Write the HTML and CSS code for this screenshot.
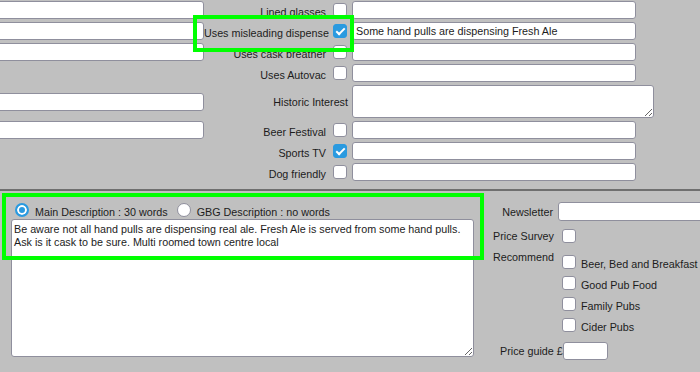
FILE: index.html
```html
<!DOCTYPE html>
<html lang="en">
<head>
    <meta charset="UTF-8">
    <title>Pub details</title>
    <link rel="stylesheet" href="styles.css">
</head>
<body>

    <!-- upper part of the form -->
    <div class="facilities">
        <input type="text" class="left-input" style="grid-row: 1">
        <label class="fac-label" style="grid-row: 1">Lined glasses</label>
        <input type="checkbox" class="check" style="grid-row: 1">
        <input type="text" class="fac-input" style="grid-row: 1">

        <input type="text" class="left-input" style="grid-row: 2">
        <label class="fac-label" style="grid-row: 2">Uses misleading dispense</label>
        <input type="checkbox" class="check" style="grid-row: 2" checked>
        <input type="text" class="fac-input" style="grid-row: 2" value="Some hand pulls are dispensing Fresh Ale">

        <input type="text" class="left-input" style="grid-row: 3">
        <label class="fac-label" style="grid-row: 3">Uses cask breather</label>
        <input type="checkbox" class="check" style="grid-row: 3">
        <input type="text" class="fac-input" style="grid-row: 3">

        <label class="fac-label" style="grid-row: 4">Uses Autovac</label>
        <input type="checkbox" class="check" style="grid-row: 4">
        <input type="text" class="fac-input" style="grid-row: 4">

        <input type="text" class="left-input" style="grid-row: 5">
        <label class="fac-label wide" style="grid-row: 5">Historic Interest</label>
        <textarea class="fac-area" style="grid-row: 5"></textarea>

        <input type="text" class="left-input" style="grid-row: 6">
        <label class="fac-label" style="grid-row: 6">Beer Festival</label>
        <input type="checkbox" class="check" style="grid-row: 6">
        <input type="text" class="fac-input" style="grid-row: 6">

        <label class="fac-label" style="grid-row: 7">Sports TV</label>
        <input type="checkbox" class="check" style="grid-row: 7" checked>
        <input type="text" class="fac-input" style="grid-row: 7">

        <label class="fac-label" style="grid-row: 8">Dog friendly</label>
        <input type="checkbox" class="check" style="grid-row: 8">
        <input type="text" class="fac-input" style="grid-row: 8">
    </div>

    <!-- lower part: description + extras -->
    <div class="lower">
        <div class="desc">
            <div class="desc-tabs">
                <input type="radio" name="desc" class="radio" checked>
                <span class="tab-text">Main Description : 30 words</span>
                <input type="radio" name="desc" class="radio">
                <span class="tab-text">GBG Description : no words</span>
            </div>
            <textarea class="desc-area">Be aware not all hand pulls are dispensing real ale. Fresh Ale is served from some hand pulls. Ask is it cask to be sure. Multi roomed town centre local</textarea>
        </div>

        <div class="extras">
            <label class="ex-label">Newsletter</label>
            <input type="text" class="news-input">

            <label class="ex-label">Price Survey</label>
            <div><input type="checkbox" class="check"></div>

            <label class="ex-label top">Recommend</label>
            <div class="rec-list">
                <label class="rec-item"><input type="checkbox" class="check"><span>Beer, Bed and Breakfast</span></label>
                <label class="rec-item"><input type="checkbox" class="check"><span>Good Pub Food</span></label>
                <label class="rec-item"><input type="checkbox" class="check"><span>Family Pubs</span></label>
                <label class="rec-item"><input type="checkbox" class="check"><span>Cider Pubs</span></label>
            </div>

            <div class="price-row">Price guide £<input type="text" class="price-input"></div>
        </div>
    </div>

    <!-- highlight boxes -->
    <div class="mark mark-dispense"></div>
    <div class="mark mark-desc"></div>

</body>
</html>
```

FILE: styles.css
```css
body {
    font-family: 'Liberation Sans', Arial, sans-serif;
    font-size: 10.75px;
    color: #1c1c1c;
    background: #c0c0c0;
    margin: 0;
    overflow: hidden;
}
input[type="text"], textarea {
    font-family: inherit;
    font-size: 10.75px;
    color: #1c1c1c;
    background: #fff;
    border: 1px solid #8f8f9d;
    border-radius: 3px;
    box-sizing: border-box;
    margin: 0;
    padding: 0 3px;
    outline: none;
}

/* checkboxes and radios */
.check {
    appearance: none;
    width: 14px;
    height: 14px;
    margin: 0;
    background: #fff;
    border: 1px solid #8f8f9d;
    border-radius: 3px;
    box-sizing: border-box;
    position: relative;
}
.check:checked {
    background: #2a9ae0;
    border-color: #2a9ae0;
}
.check:checked::after {
    content: "";
    position: absolute;
    left: 4px;
    top: 1px;
    width: 3px;
    height: 7px;
    border: solid #fff;
    border-width: 0 2px 2px 0;
    transform: rotate(45deg);
}
.radio {
    appearance: none;
    width: 14px;
    height: 14px;
    margin: 0 6px 0 4px;
    background: #fff;
    border: 1px solid #8f8f9d;
    border-radius: 50%;
    box-sizing: border-box;
}
.radio:checked {
    border: 2px solid #2a9ae0;
    background: #2a9ae0;
    box-shadow: inset 0 0 0 2px #fff;
}

/* upper grid */
.facilities {
    display: grid;
    grid-template-columns: 224px 124px 24px 302px;
    grid-template-rows: 18px 18px 18px 18px 33px 18px 18px 18px;
    row-gap: 3px;
    margin-left: -20px;
    padding: 1px 0 8px;
    align-items: center;
}
.left-input {
    grid-column: 1;
    height: 18px;
    width: 224px;
}
.fac-label {
    grid-column: 2;
    text-align: right;
    white-space: nowrap;
    padding: 3px 2px 0 0;
}
.fac-label.wide {
    grid-column: 2 / 4;
    padding: 0 4px 0 0;
}
.facilities .check {
    grid-column: 3;
    margin-left: 5px;
}
.fac-input {
    grid-column: 4;
    width: 284px;
    height: 18px;
}
.fac-area {
    grid-column: 4;
    width: 302px;
    height: 33px;
    resize: both;
}

/* lower part */
.lower {
    border-top: 2px solid #6f6f6f;
    display: flex;
    padding-top: 10px;
}
.desc {
    padding-left: 11px;
    width: 463px;
}
.desc-tabs {
    display: flex;
    align-items: center;
    height: 18px;
}
.desc-tabs .radio:first-child {
    margin-left: 4px;
}
.tab-text {
    padding-top: 3px;
    margin-right: 5px;
}
.desc-area {
    display: block;
    width: 463px;
    height: 138px;
    line-height: 13px;
    padding: 3px 2px;
    resize: both;
}
.extras {
    margin-left: 19px;
    padding-top: 1px;
    display: grid;
    grid-template-columns: 60px auto;
    column-gap: 5px;
    row-gap: 8px;
    align-items: center;
    align-content: start;
}
.ex-label {
    text-align: right;
    white-space: nowrap;
}
.ex-label.top {
    align-self: start;
    line-height: 13px;
}
.news-input {
    width: 200px;
    height: 19px;
}
.extras .check {
    display: block;
    margin-left: 4px;
}
.rec-list {
    display: flex;
    flex-direction: column;
}
.rec-item {
    display: flex;
    align-items: flex-start;
    height: 21px;
    white-space: nowrap;
}
.rec-item .check {
    margin-top: 4px;
}
.rec-item span {
    padding: 7px 0 0 5px;
    line-height: 13px;
}
.price-row {
    grid-column: 1 / 3;
    padding-left: 7px;
    margin-top: -1px;
    display: flex;
    align-items: center;
}
.price-input {
    width: 45px;
    height: 18px;
    margin-left: 1px;
}

/* green highlight frames */
.mark {
    position: absolute;
    border: 4px solid #00ff00;
    box-sizing: border-box;
}
.mark-dispense {
    left: 193px;
    top: 15px;
    width: 161px;
    height: 37px;
}
.mark-desc {
    left: 2px;
    top: 193px;
    width: 482px;
    height: 67px;
}
```
